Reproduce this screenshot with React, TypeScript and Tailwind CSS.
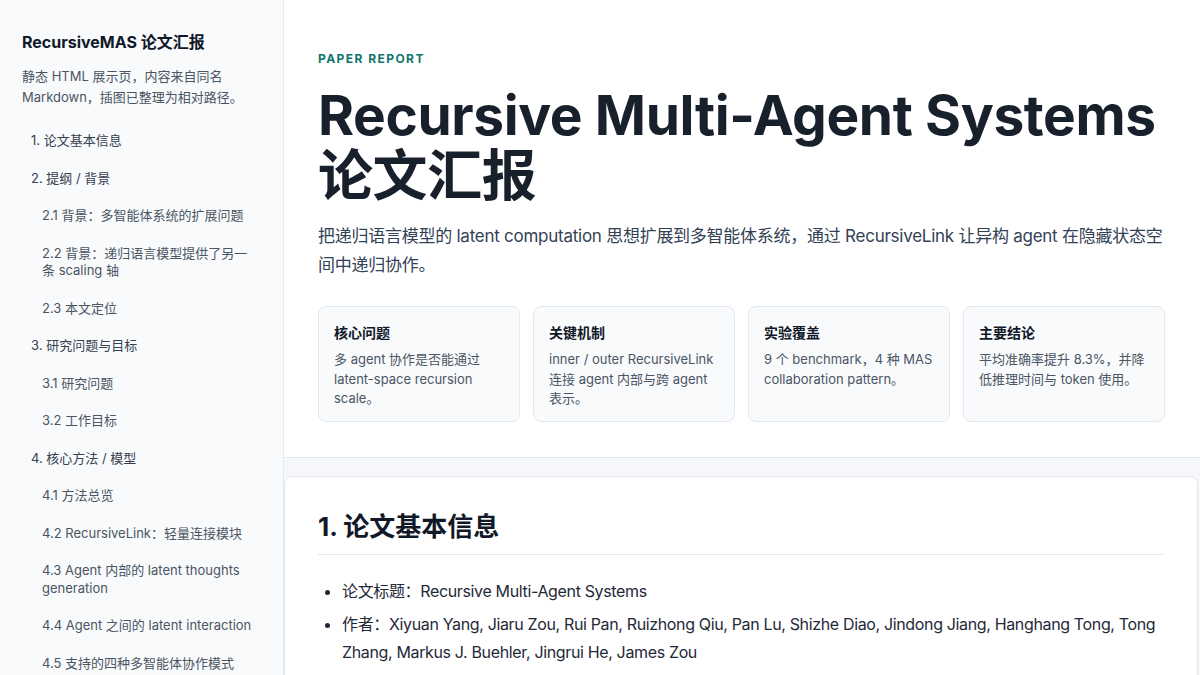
import React from 'react';

const nav: { label: string; sub?: boolean }[] = [
  { label: '1. 论文基本信息' },
  { label: '2. 提纲 / 背景' },
  { label: '2.1 背景：多智能体系统的扩展问题', sub: true },
  { label: '2.2 背景：递归语言模型提供了另一条 scaling 轴', sub: true },
  { label: '2.3 本文定位', sub: true },
  { label: '3. 研究问题与目标' },
  { label: '3.1 研究问题', sub: true },
  { label: '3.2 工作目标', sub: true },
  { label: '4. 核心方法 / 模型' },
  { label: '4.1 方法总览', sub: true },
  { label: '4.2 RecursiveLink：轻量连接模块', sub: true },
  { label: '4.3 Agent 内部的 latent thoughts generation', sub: true },
  { label: '4.4 Agent 之间的 latent interaction', sub: true },
  { label: '4.5 支持的四种多智能体协作模式', sub: true },
];

const cards = [
  { title: '核心问题', body: '多 agent 协作是否能通过 latent-space recursion scale。' },
  { title: '关键机制', body: 'inner / outer RecursiveLink 连接 agent 内部与跨 agent 表示。' },
  { title: '实验覆盖', body: '9 个 benchmark，4 种 MAS collaboration pattern。' },
  { title: '主要结论', body: '平均准确率提升 8.3%，并降低推理时间与 token 使用。' },
];

export default function App() {
  return (
    <div className="flex h-screen overflow-hidden font-['Inter','Noto_Sans_CJK_SC',sans-serif] text-[#1f2937]">
      {/* sidebar */}
      <aside className="w-[284px] shrink-0 border-r border-[#e2e8f0] bg-[#f8fafc] px-[22px] pt-[30px]">
        <h2 className="text-[16px] leading-6 font-bold text-[#111827]">RecursiveMAS 论文汇报</h2>
        <p className="mt-[12px] text-[13px] leading-[21px] text-[#4b5563]">
          静态 HTML 展示页，内容来自同名 Markdown，插图已整理为相对路径。
        </p>
        <nav className="mt-[14px] flex flex-col">
          {nav.map((n) => (
            <a
              key={n.label}
              className={
                'block py-[10px] pr-[9px] text-[13px] leading-[17.5px] ' +
                (n.sub ? 'pl-[20px] text-[#4b5563]' : 'pl-[9px] text-[#374151]')
              }
            >
              {n.label}
            </a>
          ))}
        </nav>
      </aside>

      {/* main */}
      <main className="flex-1 overflow-hidden bg-[#f5f7fa]">
        <header className="border-b border-[#e2e8f0] bg-white pl-[34px] pr-[35px] pt-[51px] pb-[35px]">
          <div className="text-[12px] leading-4 font-bold tracking-[0.12em] text-[#0f766e]">PAPER REPORT</div>
          <h1 className="mt-[18px] text-[55px] leading-[60px] font-bold tracking-[-0.007em] text-[#18202c]">
            Recursive Multi-Agent Systems 论文汇报
          </h1>
          <p className="mt-[17px] text-[17px] leading-[29px] tracking-[-0.015em] text-[#334155]">
            把递归语言模型的 latent computation 思想扩展到多智能体系统，通过 RecursiveLink 让异构 agent 在隐藏状态空间中递归协作。
          </p>
          <div className="mt-[26px] grid grid-cols-4 gap-[13px]">
            {cards.map((c) => (
              <div key={c.title} className="rounded-lg border border-[#e2e8f0] bg-[#f8fafc] px-[15px] pt-4 pb-3">
                <div className="text-[14px] leading-5 font-bold text-[#111827]">{c.title}</div>
                <div className="mt-[7px] text-[13px] leading-[19.5px] text-[#4b5563]">{c.body}</div>
              </div>
            ))}
          </div>
        </header>

        <section className="mt-[18px] mr-[2px] rounded-lg border border-[#e2e8f0] bg-white px-[33px] pt-[33px] pb-8">
          <h2 className="border-b border-[#e2e8f0] pb-[10px] text-[26px] leading-[34px] font-bold text-[#111827]">
            1. 论文基本信息
          </h2>
          <ul className="mt-[22px] list-disc pl-6 text-[16px] leading-[28px] tracking-[-0.022em] text-[#1f2937] marker:text-[#1f2937]">
            <li>论文标题：Recursive Multi-Agent Systems</li>
            <li className="mt-[5px]">
              作者：Xiyuan Yang, Jiaru Zou, Rui Pan, Ruizhong Qiu, Pan Lu, Shizhe Diao, Jindong Jiang, Hanghang Tong, Tong Zhang, Markus J. Buehler, Jingrui He, James Zou
            </li>
          </ul>
        </section>
      </main>
    </div>
  );
}
